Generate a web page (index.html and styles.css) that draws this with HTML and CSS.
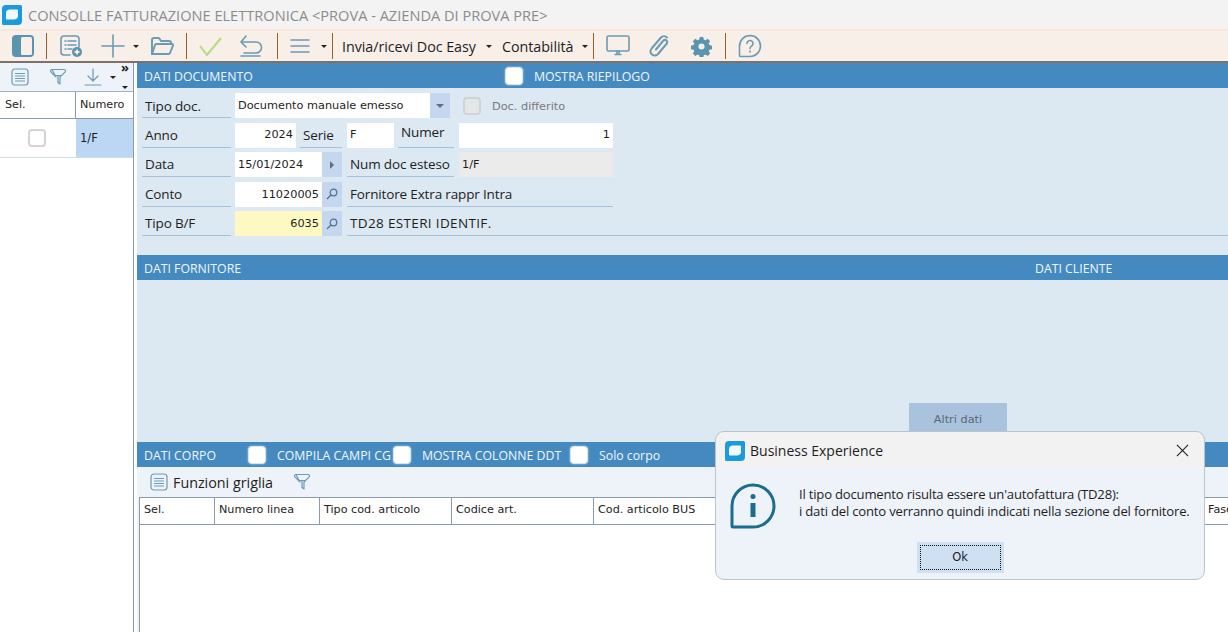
FILE: index.html
```html
<!DOCTYPE html>
<html lang="it">
<head>
<meta charset="utf-8">
<title>Consolle fatturazione elettronica</title>
<link rel="stylesheet" href="styles.css">
</head>
<body>
<div class="app">
  <header class="titlebar">
    <svg class="logo" viewBox="0 0 20 20"><path class="logo-bg" d="M4 0h14.500A1.500 1.500 0 0 1 20 1.500V16a4 4 0 0 1-4 4H1.500A1.500 1.500 0 0 1 0 18.500V4a4 4 0 0 1 4-4z"/><path class="logo-in" d="M8 4.500h7a1 1 0 0 1 1 1v5a4 4 0 0 1-3.500 4H5a1 1 0 0 1-1-1v-5a4 4 0 0 1 4-4z"/></svg>
    <span class="title">CONSOLLE FATTURAZIONE ELETTRONICA &lt;PROVA - AZIENDA DI PROVA PRE&gt;</span>
  </header>
  <nav class="toolbar">
    <svg class="ico t-panel" viewBox="0 0 24 24"><rect class="fill-teal" x="1" y="1" width="22" height="22" rx="4"/><rect class="fill-white" x="10" y="3" width="11" height="18" rx="1.500"/></svg>
    <i class="sep s1"></i>
    <svg class="ico t-new" viewBox="0 0 24 24"><path class="st" d="M11 21H5a3 3 0 0 1-3-3V5a3 3 0 0 1 3-3h12a3 3 0 0 1 3 3v8"/><path class="st" d="M6 7h1M9 7h8M6 11h1M9 11h8M6 15h1M9 15h4"/><circle class="fill-teal" cx="18" cy="18" r="5"/><path class="st-w" d="M18 15.500v5M15.500 18h5"/></svg>
    <svg class="ico t-plus" viewBox="0 0 24 24"><path class="st" d="M12 1v22M1 12h22"/></svg>
    <i class="caret c1"></i>
    <svg class="ico t-open" viewBox="0 0 24 24"><path class="st st2" d="M2 20V6a2 2 0 0 1 2-2h5l2 3h8a2 2 0 0 1 2 2v1"/><path class="st st2" d="M2 20l3-9a1.500 1.500 0 0 1 1.500-1H22a1 1 0 0 1 1 1.500L20 19a1.500 1.500 0 0 1-1.500 1z"/></svg>
    <i class="sep s2"></i>
    <svg class="ico t-check" viewBox="0 0 24 24"><path class="st-green" d="M1 12l7 9L22 4"/></svg>
    <svg class="ico t-undo" viewBox="0 0 24 24"><path class="st" d="M7 2L2 8l5 5M2 8h15a5.500 5.500 0 0 1 0 11H5M2 22h19"/></svg>
    <i class="sep s3"></i>
    <svg class="ico t-menu" viewBox="0 0 24 24"><path class="st" d="M3 6h18M3 12h18M3 18h18"/></svg>
    <i class="caret c2"></i>
    <i class="sep s4"></i>
    <span class="tb-text t-invia">Invia/ricevi Doc Easy</span><i class="caret c3"></i>
    <span class="tb-text t-cont">Contabilità</span><i class="caret c4"></i>
    <i class="sep s5"></i>
    <svg class="ico t-monitor" viewBox="0 0 24 24"><rect class="st" x="1" y="2" width="22" height="15" rx="1.500"/><path class="st" d="M9 20.500h6M11 17v3M13 17v3"/></svg>
    <svg class="ico t-clip" viewBox="0 0 24 24"><path class="st st2" d="M19 3.500c-2-2-4.500-1.500-6 0L4 14c-2 2.500-2 5 0 6.500s4.500 1 6-.5l8-9.500c1.500-1.500 1.500-3 .5-4s-2.500-.5-3.500.5L8 15.500"/></svg>
    <svg class="ico t-gear" viewBox="0 0 24 24"><path class="fill-teal" fill-rule="evenodd" d="M10 1h4l.6 3 1.900.8 2.600-1.700 2.800 2.800-1.700 2.600.8 1.900 3 .6v4l-3 .6-.8 1.900 1.700 2.600-2.800 2.800-2.600-1.700-1.900.8-.6 3h-4l-.6-3-1.900-.8-2.600 1.700-2.800-2.800 1.700-2.600-.8-1.900-3-.6v-4l3-.6.8-1.900-1.700-2.600 2.800-2.800 2.600 1.700 1.900-.8zM12 8.500a3.500 3.500 0 1 0 0 7 3.500 3.500 0 0 0 0-7z"/></svg>
    <i class="sep s6"></i>
    <svg class="ico t-help" viewBox="0 0 24 24"><path class="st" d="M12 1.500a10.500 10.500 0 0 1 0 21H2.500a1 1 0 0 1-1-1V12A10.500 10.500 0 0 1 12 1.500z"/><path class="st" d="M9 9.500a3 3 0 1 1 4.500 2.600c-1 .6-1.500 1.200-1.500 2.400M12 17v1"/></svg>
  </nav>
  <div class="main">
    <aside class="side">
      <div class="side-tools">
        <svg class="sico si1" viewBox="0 0 18 18"><rect class="st-thin" x="1" y="1" width="16" height="16" rx="3"/><path class="st-thin" d="M4.500 5.500h9M4.500 8h9M4.500 10.500h9M4.500 13h9"/></svg>
        <svg class="sico si2" viewBox="0 0 18 18"><path class="st-thin" d="M3 1.500h12a1.500 1.500 0 0 1 1.200 2.400L11 9v7l-2-1.500M7 9L1.800 3.900A1.500 1.500 0 0 1 3 1.500z"/><path class="st-thin" d="M6.500 7.500h5M9 7.500V14"/></svg>
        <svg class="sico si3" viewBox="0 0 18 18"><path class="st-thin" d="M9 1v11M4 8l5 5 5-5M1 17h16"/></svg>
        <i class="caret c5"></i>
        <span class="more">»</span>
        <i class="caret c6"></i>
      </div>
      <div class="side-head"><span class="sh-sel">Sel.</span><span class="sh-num">Numero</span></div>
      <div class="side-row"><span class="sr-sel"><i class="chk grey"></i></span><span class="sr-num">1/F</span></div>
    </aside>
    <div class="content">
      <section class="section doc">
        <div class="band band-doc"><span class="bt-doc">DATI DOCUMENTO</span><i class="chk white c-rie"></i><span>MOSTRA RIEPILOGO</span></div>
        <div class="form">
          <div class="row">
            <span class="lbl w89">Tipo doc.</span>
            <span class="fld w195">Documento manuale emesso</span><span class="btn dropbtn"><i class="caret grey-caret"></i></span>
            <i class="chk disabled"></i><span class="dis-label">Doc. differito</span>
          </div>
          <div class="row">
            <span class="lbl w89">Anno</span>
            <span class="fld right w61">2024</span>
            <span class="lbl w42">Serie</span>
            <span class="fld w47 ml1">F</span>
            <span class="lbl w56 raised">Numer</span>
            <span class="fld right w154 ml1">1</span>
          </div>
          <div class="row">
            <span class="lbl w89">Data</span>
            <span class="fld w87">15/01/2024</span><span class="btn"><i class="tri"></i></span>
            <span class="lbl w107 ml1">Num doc esteso</span>
            <span class="fld ro w154 ml1">1/F</span>
          </div>
          <div class="row">
            <span class="lbl w89">Conto</span>
            <span class="fld right w87">11020005</span><span class="btn"><svg class="lens" viewBox="0 0 12 12"><circle cx="7.500" cy="4.500" r="3.300"/><path d="M5 7l-4 4"/></svg></span>
            <span class="lbl w266 ml1">Fornitore Extra rappr Intra</span>
          </div>
          <div class="row">
            <span class="lbl w89">Tipo B/F</span>
            <span class="fld right w87 yellow">6035</span><span class="btn"><svg class="lens" viewBox="0 0 12 12"><circle cx="7.500" cy="4.500" r="3.300"/><path d="M5 7l-4 4"/></svg></span>
            <span class="lbl grow ml1 caps">TD28 ESTERI IDENTIF.</span>
          </div>
        </div>
      </section>
      <section class="section forn">
        <div class="band band-forn"><span class="bt-forn">DATI FORNITORE</span><span>DATI CLIENTE</span></div>
        <div class="forn-body"><span class="altri">Altri dati</span></div>
      </section>
      <section class="section corpo">
        <div class="band band-corpo">
          <span class="bt-corpo">DATI CORPO</span><i class="chk white"></i>
          <span class="cb1">COMPILA CAMPI CG</span><i class="chk white"></i>
          <span class="cb2">MOSTRA COLONNE DDT</span><i class="chk white"></i>
          <span class="cb3">Solo corpo</span>
        </div>
        <div class="grid-tools">
          <svg class="sico gi1" viewBox="0 0 18 18"><rect class="st-thin" x="1" y="1" width="16" height="16" rx="3"/><path class="st-thin" d="M4.500 5.500h9M4.500 8h9M4.500 10.500h9M4.500 13h9"/></svg>
          <span class="gt-text">Funzioni griglia</span>
          <svg class="sico gi2" viewBox="0 0 18 18"><path class="st-thin" d="M3 1.500h12a1.500 1.500 0 0 1 1.200 2.400L11 9v7l-2-1.500M7 9L1.800 3.900A1.500 1.500 0 0 1 3 1.500z"/><path class="st-thin" d="M6.500 7.500h5M9 7.500V14"/></svg>
        </div>
        <div class="table">
          <div class="thead">
            <span class="th c-a">Sel.</span>
            <span class="th c-b">Numero linea</span>
            <span class="th c-c">Tipo cod. articolo</span>
            <span class="th c-d">Codice art.</span>
            <span class="th c-e">Cod. articolo BUS</span>
            <span class="th c-f"></span>
            <span class="th c-g">Fase</span>
          </div>
        </div>
      </section>
    </div>
  </div>
  <div class="dialog">
    <div class="dlg-title">
      <svg class="dlg-logo" viewBox="0 0 20 20"><path class="logo-bg" d="M4 0h14.500A1.500 1.500 0 0 1 20 1.500V16a4 4 0 0 1-4 4H1.500A1.500 1.500 0 0 1 0 18.500V4a4 4 0 0 1 4-4z"/><path class="logo-in" d="M8 4.500h7a1 1 0 0 1 1 1v5a4 4 0 0 1-3.500 4H5a1 1 0 0 1-1-1v-5a4 4 0 0 1 4-4z"/></svg>
      <span class="dlg-name">Business Experience</span>
      <svg class="dlg-x" viewBox="0 0 14 14"><path d="M1 1l12 12M13 1L1 13"/></svg>
    </div>
    <div class="dlg-body">
      <svg class="dlg-info" viewBox="0 0 46 46"><path class="info-line" d="M23 2a21 21 0 0 1 0 42H3a1 1 0 0 1-1-1V23A21 21 0 0 1 23 2z"/><circle class="info-dot" cx="23" cy="13.500" r="2.500"/><path class="info-bar" d="M23 20v14"/></svg>
      <p class="dlg-msg">Il tipo documento risulta essere un'autofattura (TD28):<br>i dati del conto verranno quindi indicati nella sezione del fornitore.</p>
    </div>
    <div class="dlg-foot"><button class="ok"><span>Ok</span></button></div>
  </div>
</div>
</body>
</html>
```

FILE: styles.css
```css
* { box-sizing: border-box; }
html, body { margin: 0; height: 100%; overflow: hidden; background: #fff; }
.app { position: relative; width: 1228px; height: 632px; overflow: hidden; display: flex; flex-direction: column; font-family: "Open Sans", "Noto Sans", sans-serif; font-size: 13px; color: #1e1e1e; }

.titlebar { height: 29px; background: #f3f3f3; display: flex; align-items: center; padding-left: 2px; }
.logo { width: 20px; height: 20px; margin-right: 6px; }
.logo-bg { fill: #1b9ade; }
.logo-in { fill: #f2f9fd; }
.title { font-size: 14.600px; color: #8c8c8c; white-space: nowrap; }

.toolbar { height: 34px; background: #f7efe8; border-top: 2px solid #fae6d6; border-bottom: 2px solid #7d7168; display: flex; align-items: center; }
.ico { width: 24px; height: 24px; flex: none; }
.sep { width: 1px; height: 26px; background: #9b5f2e; flex: none; }
.st { fill: none; stroke: #6a9cb3; stroke-width: 1.600; stroke-linecap: round; stroke-linejoin: round; }
.st2 { stroke-width: 2; }
.st-w { fill: none; stroke: #fff; stroke-width: 1.500; }
.st-green { fill: none; stroke: #b3db82; stroke-width: 2; }
.st-thin { fill: none; stroke: #6a9cb3; stroke-width: 1.200; stroke-linecap: round; stroke-linejoin: round; }
.fill-teal { fill: #5a94ae; }
.fill-white { fill: #f7efe8; }
.caret { width: 0; height: 0; border-left: 3px solid transparent; border-right: 3px solid transparent; border-top: 3px solid #222; flex: none; }
.t-panel { margin-left: 11px; }
.s1 { margin-left: 11px; }
.t-new { margin-left: 12px; }
.t-plus { margin-left: 18px; }
.c1 { margin-left: 8px; }
.t-open { margin-left: 11px; }
.s2 { margin-left: 12px; }
.t-check { margin-left: 12px; }
.t-undo { margin-left: 16px; }
.s3 { margin-left: 14px; }
.t-menu { margin-left: 10px; }
.c2 { margin-left: 9px; }
.s4 { margin-left: 5px; }
.tb-text { font-size: 14.300px; color: #1e1e1e; white-space: nowrap; letter-spacing: -0.05px; }
.t-invia { margin-left: 9px; width: 137px; }
.c3 { margin-left: 7px; }
.t-cont { margin-left: 10px; width: 73px; }
.c4 { margin-left: 7px; }
.s5 { margin-left: 5px; }
.t-monitor { margin-left: 12px; }
.t-clip { margin-left: 18px; }
.t-gear { margin-left: 19px; width: 21px; height: 21px; }
.s6 { margin-left: 13px; }
.t-help { margin-left: 12px; }

.main { flex: 1; display: flex; min-height: 0; }
.side { width: 134px; flex: none; background: #fff; border-right: 1px solid #8b9aa8; display: flex; flex-direction: column; }
.side-tools { height: 29px; background: #eef3f9; border-bottom: 1px solid #9fb0c0; display: flex; align-items: center; position: relative; }
.sico { width: 18px; height: 18px; flex: none; }
.si1 { margin-left: 11px; }
.si2 { margin-left: 20px; }
.si3 { margin-left: 17px; }
.c5 { margin-left: 8px; }
.more { position: absolute; right: 4px; top: -4px; font-size: 13px; font-weight: 700; line-height: 16px; color: #222; }
.c6 { position: absolute; right: 5px; top: 23px; }
.side-head { height: 27px; display: flex; font-family: "DejaVu Sans", sans-serif; font-size: 11.200px; border-bottom: 1px solid #8b9aa8; }
.sh-sel { width: 76px; padding: 6px 0 0 5px; border-right: 1px solid #8b9aa8; }
.sh-num { padding: 6px 0 0 4px; }
.side-row { height: 39px; display: flex; border-bottom: 1px solid #cfdbe6; font-family: "DejaVu Sans", sans-serif; font-size: 11.500px; }
.sr-sel { width: 76px; display: flex; align-items: center; justify-content: center; padding-right: 2px; }
.sr-num { flex: 1; background: #bcd7f3; padding: 12px 0 0 4px; }

.chk { display: block; width: 18px; height: 18px; border-radius: 4px; flex: none; }
.chk.grey { background: #fff; border: 2px solid #d4d4d4; }
.chk.white { background: #fff; border: 1px solid #d9e3ec; box-shadow: 0 0 2px rgba(255,255,255,.7); }
.chk.disabled { background: #e4e6e8; border: 2px solid #d0d3d6; margin-left: 13px; }

.content { flex: 1; min-width: 0; display: flex; flex-direction: column; padding-left: 3px; background: #fff; }
.section { display: flex; flex-direction: column; background: #dce8f2; }
.doc { height: 192px; }
.forn { height: 187px; }
.corpo { flex: 1; min-height: 0; background: #eef3f9; }
.band { height: 25px; flex: none; background: #448ac1; color: #f2f7fb; font-size: 12.300px; display: flex; align-items: center; white-space: nowrap; padding-top: 1px; }
.band .chk { margin-top: -1px; }
.band-doc { padding-left: 7px; }
.bt-doc { width: 361px; }
.c-rie { margin-right: 11px; }
.band-forn { padding-left: 7px; }
.bt-forn { width: 891px; }
.band-corpo { padding-left: 7px; }
.bt-corpo { width: 104px; }
.cb1 { margin-left: 11px; width: 116px; }
.cb2 { margin-left: 11px; width: 148px; }
.cb3 { margin-left: 11px; }

.form { padding: 5px 0 0 5px; display: flex; flex-direction: column; gap: 4.500px; }
.row { display: flex; height: 25px; gap: 4px; font-family: "Open Sans", sans-serif; }
.lbl { height: 25px; border-bottom: 1px solid #a7c0da; font-size: 13.500px; line-height: 24px; padding-left: 3px; white-space: nowrap; letter-spacing: -0.15px; }
.row:first-child .lbl { line-height: 26px; }
.raised { line-height: 18px; }
.caps { letter-spacing: 0.35px; }
.fld { height: 25px; background: #fff; font-family: "DejaVu Sans", sans-serif; font-size: 11.300px; line-height: 26px; padding: 0 3px; white-space: nowrap; }
.row:nth-child(2) .fld { line-height: 24px; }
.right { text-align: right; }
.ro { background: #ebebeb; }
.yellow { background: #fef9c3; }
.w89 { width: 89px; }
.w195 { width: 195px; }
.w61 { width: 61px; }
.w42 { width: 42px; }
.w47 { width: 47px; }
.w56 { width: 56px; }
.w154 { width: 154px; }
.w87 { width: 87px; }
.w107 { width: 107px; }
.w266 { width: 266px; }
.grow { flex: 1; }
.ml1 { margin-left: 1px; }
.btn { width: 20px; height: 25px; background: #c4d7ee; margin-left: -4px; display: flex; align-items: center; justify-content: center; flex: none; }
.grey-caret { border-top: 4px solid #5f6f80; border-left-width: 4px; border-right-width: 4px; }
.tri { width: 0; height: 0; border-top: 4px solid transparent; border-bottom: 4px solid transparent; border-left: 4px solid #5f6f80; }
.lens { width: 12px; height: 12px; fill: none; stroke: #55708a; stroke-width: 1.200; }
.row .chk.disabled { align-self: center; margin-left: 9px; }
.dis-label { font-family: "DejaVu Sans", sans-serif; font-size: 11.300px; color: #7a7a7a; line-height: 28px; margin-left: 7px; }

.forn-body { flex: 1; position: relative; display: flex; justify-content: center; align-items: flex-end; }
.altri { width: 98px; height: 39px; background: #a9c2de; color: #5b6874; font-family: "DejaVu Sans", sans-serif; font-size: 11.300px; text-align: center; padding-top: 10px; margin: 0 0 -10px 0; position: absolute; left: 772px; top: 123px; }

.grid-tools { height: 30px; flex: none; display: flex; align-items: center; padding-left: 13px; }
.gt-text { font-size: 14.300px; margin-left: 5px; width: 120px; }
.table { flex: 1; margin-left: 2px; background: #fff; border-left: 1px solid #8b9aa8; border-top: 1px solid #8b9aa8; }
.thead { height: 27px; display: flex; border-bottom: 1px solid #8b9aa8; font-family: "DejaVu Sans", sans-serif; font-size: 11.200px; }
.th { padding: 5px 0 0 4px; border-right: 1px solid #8b9aa8; white-space: nowrap; flex: none; }
.c-a { width: 75px; }
.c-b { width: 105px; }
.c-c { width: 132px; }
.c-d { width: 142px; }
.c-e { width: 142px; }
.c-f { width: 468px; }
.c-g { border-right: 0; }

.dialog { position: absolute; left: 715px; top: 431px; width: 490px; height: 149px; border: 1px solid #bcc3ca; border-radius: 9px; background: linear-gradient(#f2f2f2 0, #f2f2f2 36px, #eef2f9 36px); display: flex; flex-direction: column; overflow: hidden; }
.dlg-title { height: 37px; flex: none; display: flex; align-items: center; padding-left: 9px; }
.dlg-logo { width: 20px; height: 20px; }
.dlg-name { font-size: 14px; margin-left: 5px; flex: 1; }
.dlg-x { width: 13px; height: 13px; margin-right: 15px; fill: none; stroke: #222; stroke-width: 1.200; }
.dlg-body { height: 62px; flex: none; display: flex; align-items: flex-start; padding-left: 14px; }
.dlg-info { width: 46px; height: 46px; margin-top: 14px; flex: none; }
.info-line { fill: none; stroke: #1b6d8f; stroke-width: 3; }
.info-dot { fill: #1b6d8f; }
.info-bar { fill: none; stroke: #1b6d8f; stroke-width: 5; }
.dlg-msg { margin: 17px 0 0 23px; font-size: 13.100px; line-height: 17px; letter-spacing: -0.2px; white-space: nowrap; }
.dlg-foot { flex: 1; display: flex; justify-content: center; }
.ok { width: 87px; height: 31px; margin-top: 11px; border: 0; background: #cfe0f3; padding: 3px; font-family: "DejaVu Sans", sans-serif; font-size: 11.500px; color: #1e1e1e; }
.ok span { display: block; height: 100%; border: 1px dotted #111; line-height: 23px; }
```
